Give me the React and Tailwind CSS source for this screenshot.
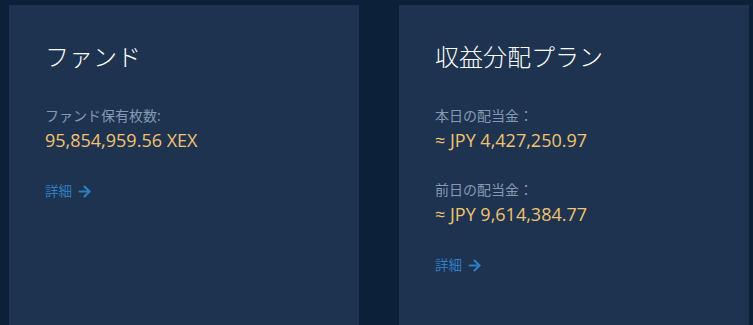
import { ArrowRight } from 'lucide-react';

const font = { fontFamily: '"Open Sans", "Noto Sans CJK JP", sans-serif' };

const DetailLink = () => (
  <a href="#" className="mt-[29px] flex items-center gap-[4px] text-[13.5px] leading-5 text-[#2f7dc3]">
    詳細
    <ArrowRight size={17} strokeWidth={3} />
  </a>
);

const Stat = ({ label, value, className = '' }) => (
  <div className={className}>
    <p className="text-[14px] leading-5 text-[#8499b3]">{label}</p>
    <p className="mt-[2px] text-[18px] leading-6 text-[#f2c270]">{value}</p>
  </div>
);

const Card = ({ title, children }) => (
  <section className="flex-1 bg-[#1e334f] px-9 pt-9">
    <h2 className="text-[24px] leading-8 font-light text-white">{title}</h2>
    <div className="mt-[33px]">{children}</div>
    <DetailLink />
  </section>
);

export default function App() {
  return (
    <div
      className="flex h-[325px] w-[753px] gap-10 overflow-hidden bg-[#0d2039] pt-[5px] pr-1 pl-[9px]"
      style={font}
    >
      <Card title="ファンド">
        <Stat label="ファンド保有枚数:" value="95,854,959.56 XEX" />
      </Card>
      <Card title="収益分配プラン">
        <Stat label="本日の配当金：" value="≈ JPY 4,427,250.97" />
        <Stat label="前日の配当金：" value="≈ JPY 9,614,384.77" className="mt-7" />
      </Card>
    </div>
  );
}
